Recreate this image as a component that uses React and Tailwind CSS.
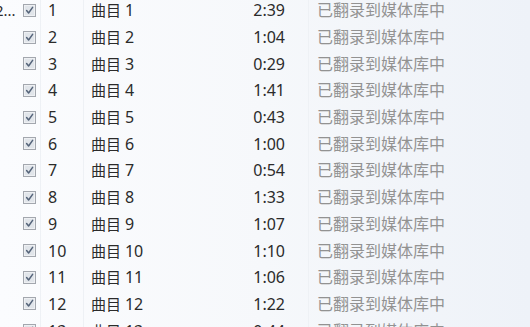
import React from 'react';

const tracks = [
  ['1', '2:39'],
  ['2', '1:04'],
  ['3', '0:29'],
  ['4', '1:41'],
  ['5', '0:43'],
  ['6', '1:00'],
  ['7', '0:54'],
  ['8', '1:33'],
  ['9', '1:07'],
  ['10', '1:10'],
  ['11', '1:06'],
  ['12', '1:22'],
  ['13', '0:44'],
];

const CheckBox = () => (
  <svg width="13" height="13" viewBox="0 0 13 13">
    <rect x="0.5" y="0.5" width="12" height="12" fill="#eef0f3" stroke="#a3a7ae" />
    <rect x="2" y="2" width="9" height="9" fill="#e1e5ea" />
    <path d="M3.6 6.6 L5.6 9 L9.6 3.4" fill="none" stroke="#55647a" strokeWidth="1.5" strokeLinecap="round" strokeLinejoin="round" />
  </svg>
);

const App = () => {
  return (
    <div
      className="w-[530px] h-[327px] overflow-hidden bg-gradient-to-r from-[#fbfcfe] via-[#f6f8fb] to-[#eef2f8] text-[15px] text-[#2b2b2b]"
      style={{ fontFamily: '"Noto Sans", "Noto Sans CJK SC", sans-serif' }}
    >
      <div className="flex h-[340px] -mt-[3px]">
        <div className="w-[41px] border-r border-[#eef1f5] flex flex-col">
          {tracks.map(([n], i) => (
            <div key={n} className="h-[26.7px] shrink-0 flex items-center relative">
              {i === 0 && (
                <span className="absolute left-[-5px] text-[15px] leading-none text-[#2b2b2b]">2...</span>
              )}
              <span className="ml-[23px] flex">
                <CheckBox />
              </span>
            </div>
          ))}
        </div>
        <div className="w-[43px] border-r border-[#eef1f5] flex flex-col">
          {tracks.map(([n]) => (
            <div key={n} className="h-[26.7px] shrink-0 flex items-center pl-[7px] text-[16px]">
              {n}
            </div>
          ))}
        </div>
        <div className="w-[225px] border-r border-[#eef1f5] flex flex-col">
          {tracks.map(([n, t]) => (
            <div key={n} className="h-[26.7px] shrink-0 flex items-center justify-between pl-[7px] pr-[23px]">
              <span>
                曲目 <span className="text-[16px]">{n}</span>
              </span>
              <span className="text-[16px]">{t}</span>
            </div>
          ))}
        </div>
        <div className="flex-1 flex flex-col">
          {tracks.map(([n]) => (
            <div key={n} className="h-[26.7px] shrink-0 flex items-center pl-[8px] text-[16px] text-[#929292]">
              已翻录到媒体库中
            </div>
          ))}
        </div>
      </div>
    </div>
  );
};

export default App;
